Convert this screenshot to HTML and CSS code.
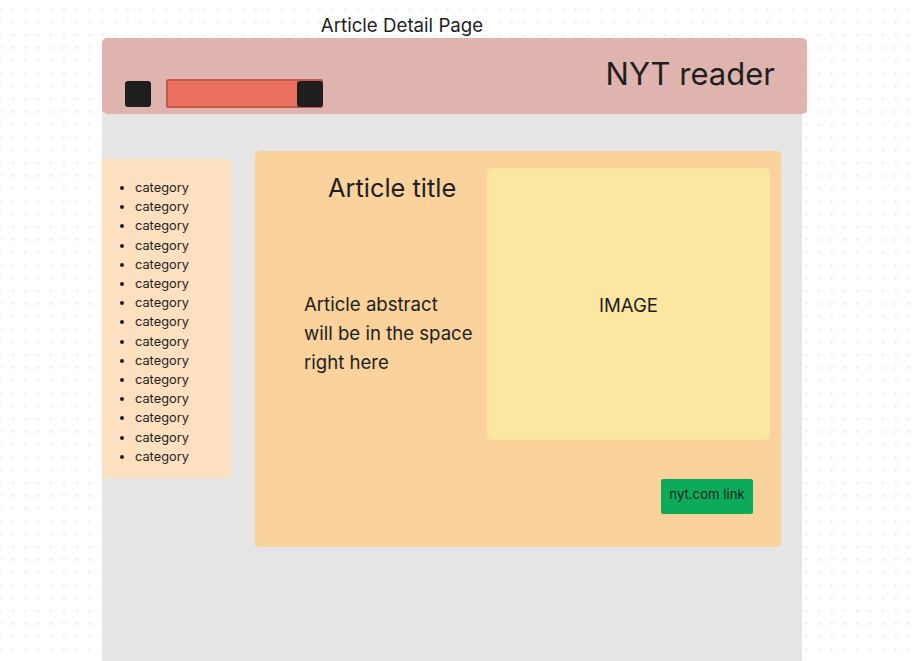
FILE: index.html
```html
<!DOCTYPE html>
<html>
<head>
<meta charset="utf-8">
<link rel="stylesheet" href="styles.css">
</head>
<body>
<div class="canvas">
  <div class="frame-label">Article Detail Page</div>
  <div class="frame">
    <header class="topbar">
      <div class="controls">
        <div class="btn-square"></div>
        <div class="slider"><div class="slider-knob"></div></div>
      </div>
      <div class="brand">NYT reader</div>
    </header>
    <div class="body">
      <aside class="sidebar">
        <ul class="cats">
          <li>category</li><li>category</li><li>category</li><li>category</li><li>category</li>
          <li>category</li><li>category</li><li>category</li><li>category</li><li>category</li>
          <li>category</li><li>category</li><li>category</li><li>category</li><li>category</li>
        </ul>
      </aside>
      <main class="card">
        <div class="card-row">
          <div class="card-text">
            <h1 class="title">Article title</h1>
            <p class="abstract">Article abstract<br>will be in the space<br>right here</p>
          </div>
          <div class="image">IMAGE</div>
        </div>
        <div class="link-row"><a class="link-btn">nyt.com link</a></div>
      </main>
    </div>
  </div>
</div>
</body>
</html>
```
FILE: styles.css
```css
html, body {
  margin: 0;
  padding: 0;
}
body {
  width: 918px;
  height: 661px;
  overflow: hidden;
  font-family: Inter, "Noto Sans", sans-serif;
  color: #1e1e1e;
  background-color: #ffffff;
  background-image: radial-gradient(circle, #d9d9d9 0.8px, transparent 1.1px);
  background-size: 12.8px 12.8px;
  background-position: 6.4px 3.1px;
}
.canvas {
  padding-left: 102px;
}
.frame-label {
  width: 600px;
  text-align: center;
  font-size: 18.7px;
  line-height: 22px;
  height: 38px;
  padding-top: 15px;
  box-sizing: border-box;
}
.frame {
  width: 705px;
}
.topbar {
  height: 76px;
  background: #e0b4ae;
  border-radius: 5px;
  display: flex;
  justify-content: space-between;
  align-items: flex-start;
  box-sizing: border-box;
  padding: 0 32px 0 23px;
}
.controls {
  display: flex;
  align-items: center;
  gap: 15px;
  margin-top: 41px;
}
.btn-square {
  width: 26px;
  height: 26px;
  background: #1e1e1e;
  border-radius: 3px;
}
.slider {
  width: 157px;
  height: 29px;
  box-sizing: border-box;
  background: #ec7060;
  border: 2px solid #c4574a;
  border-radius: 2px;
  display: flex;
  justify-content: flex-end;
  align-items: center;
}
.slider-knob {
  width: 26px;
  height: 26px;
  background: #1e1e1e;
  border-radius: 3px;
  margin-right: -2px;
}
.brand {
  font-size: 31px;
  line-height: 32px;
  margin-top: 20px;
}
.body {
  width: 700px;
  height: 547px;
  background: #e5e5e5;
  display: flex;
  align-items: flex-start;
}
.sidebar {
  width: 129px;
  height: 319px;
  margin-top: 45px;
  background: #fde0c0;
  border-radius: 0 4px 4px 0;
}
.cats {
  margin: 0;
  padding: 19px 0 0 33px;
  font-size: 12.8px;
  line-height: 19.2px;
}
.card {
  width: 526px;
  height: 396px;
  margin-top: 37px;
  margin-left: 24px;
  background: #fad29c;
  border-radius: 4px;
  box-sizing: border-box;
  padding: 17px 11px 0 0;
}
.card-row {
  display: flex;
  justify-content: space-between;
}
.card-text {
  width: 232px;
}
.title {
  margin: 0;
  font-weight: 400;
  font-size: 25.4px;
  line-height: 30px;
  padding: 5px 0 0 73px;
}
.abstract {
  margin: 87px 0 0 49px;
  font-size: 18.6px;
  line-height: 29px;
}
.image {
  width: 283px;
  height: 272px;
  background: #fce7a1;
  border-radius: 5px;
  display: flex;
  align-items: center;
  justify-content: center;
  font-size: 18.6px;
  line-height: 1;
  padding-top: 3px;
  box-sizing: border-box;
}
.link-row {
  display: flex;
  justify-content: flex-end;
  padding-right: 17px;
  margin-top: 39px;
}
.link-btn {
  width: 92px;
  height: 35px;
  background: #0bab5a;
  border-radius: 2px;
  font-size: 13.2px;
  font-weight: 400;
  display: flex;
  align-items: center;
  justify-content: center;
  color: #1e1e1e;
  padding-bottom: 5px;
  box-sizing: border-box;
}
```
